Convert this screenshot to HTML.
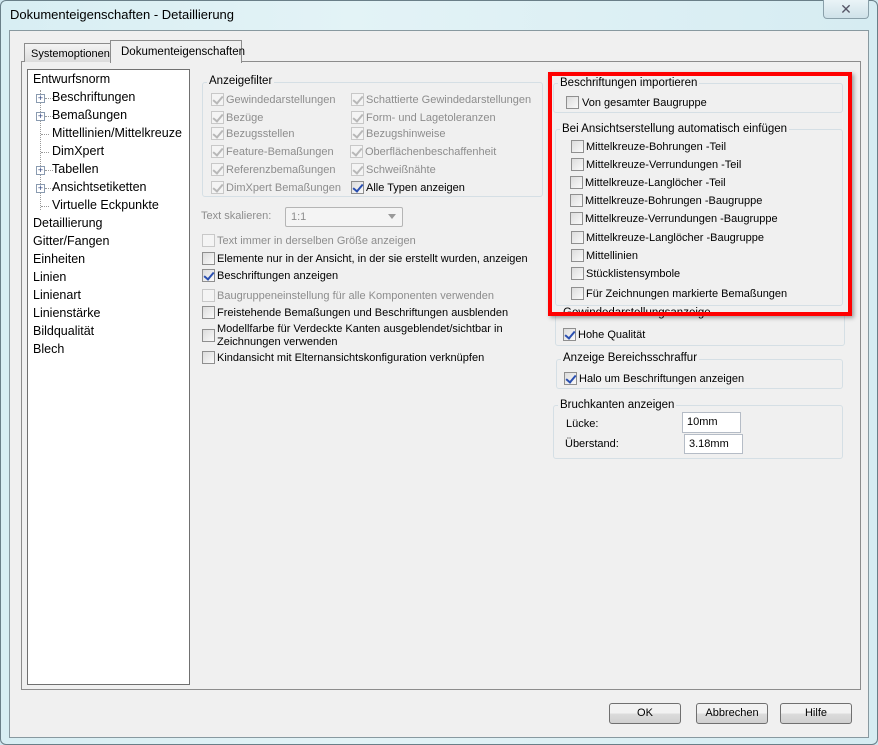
<!DOCTYPE html>
<html><head><meta charset="utf-8"><style>
*{margin:0;padding:0;box-sizing:border-box}
body{width:878px;height:745px;overflow:hidden;background:#cfe6ee;font-family:"Liberation Sans","DejaVu Sans",sans-serif;font-size:11px;color:#000;position:relative}
.a{position:absolute;white-space:nowrap}
.frame{left:0;top:0;width:878px;height:745px;background:linear-gradient(90deg,#d8eef3,#e3f3f6 40%,#d6ecf2);border:1px solid #6a7f88;border-radius:6px}
.client{left:9px;top:30px;width:860px;height:708px;background:#f0f0f0;border:1px solid #8899a0}
.panel{left:21px;top:61px;width:840px;height:629px;background:#fff;border:1px solid #8c8c8c}
.panel2{left:22px;top:62px;width:838px;height:627px;background:#f0f0f0}
.tree{left:27px;top:69px;width:163px;height:616px;background:#fff;border:1px solid #707070}
.ti{position:absolute;white-space:nowrap;font-size:12.5px}
.grp{position:absolute;border:1px solid #d5dfe5;border-radius:3px}
.lg{position:absolute;background:#f0f0f0;padding:0 2px;white-space:nowrap;font-size:11.5px}
.cb{position:absolute;width:13px;height:13px;border:1px solid #8f8f8f;background:linear-gradient(135deg,#dcdcdc,#fafafa)}
.cb.d{border-color:#c8c8c8;background:#f4f4f4}
.ck::after{content:"";position:absolute;left:3px;top:0px;width:4px;height:8px;border:solid #2a4fb0;border-width:0 2px 2px 0;transform:rotate(40deg)}
.cb.d.ck::after{border-color:#b8b8b8}
.gr{color:#8d8d8d}
.btn{position:absolute;width:72px;height:21px;border:1px solid #707070;border-radius:3px;background:linear-gradient(#f2f2f2 50%,#dcdcdc 50%,#d0d0d0);text-align:center;line-height:19px}
.inp{position:absolute;background:#fff;border:1px solid #b5bcc6;padding-left:4px;line-height:18px}
.plus{position:absolute;width:9px;height:9px;border:1px solid #8a9bb0;background:#fff;font-size:9px;line-height:7px;text-align:center;color:#2a3f7a}
.dot{position:absolute;border-left:1px dotted #999}
.dh{position:absolute;border-top:1px dotted #999;width:8px}
</style></head><body>
<div class="a frame"></div>
<div class="a" style="left:10px;top:7px;font-size:13px">Dokumenteigenschaften - Detaillierung</div>
<div class="a" style="left:823px;top:0;width:46px;height:19px;border:1px solid #8aa0aa;border-top:none;border-radius:0 0 4px 4px;background:linear-gradient(#eaf4f7,#cfe2e9);text-align:center;font-size:14px;color:#556;line-height:18px">✕</div>
<div class="a client"></div>
<div class="a panel"></div>
<div class="a panel2"></div>
<div class="a" style="left:24px;top:43px;width:87px;height:19px;border:1px solid #8c8c8c;border-bottom:none;background:linear-gradient(#f4f4f4,#dcdcdc);padding:4px 0 0 6px">Systemoptionen</div>
<div class="a" style="left:110px;top:40px;width:132px;height:23px;border:1px solid #8c8c8c;border-bottom:none;background:#f0f0f0;padding:5px 0 0 10px;font-size:11.5px">Dokumenteigenschaften</div>
<div class="a tree"></div>
<div class="dot" style="left:40px;top:90px;height:120px"></div>
<div class="ti" style="left:33px;top:72px">Entwurfsnorm</div>
<div class="plus" style="left:36px;top:94px">+</div><div class="dh" style="left:45px;top:98px"></div><div class="ti" style="left:52px;top:90px">Beschriftungen</div>
<div class="plus" style="left:36px;top:112px">+</div><div class="dh" style="left:45px;top:116px"></div><div class="ti" style="left:52px;top:108px">Bemaßungen</div>
<div class="dh" style="left:41px;top:134px"></div><div class="ti" style="left:52px;top:126px">Mittellinien/Mittelkreuze</div>
<div class="dh" style="left:41px;top:152px"></div><div class="ti" style="left:52px;top:144px">DimXpert</div>
<div class="plus" style="left:36px;top:166px">+</div><div class="dh" style="left:45px;top:170px"></div><div class="ti" style="left:52px;top:162px">Tabellen</div>
<div class="plus" style="left:36px;top:184px">+</div><div class="dh" style="left:45px;top:188px"></div><div class="ti" style="left:52px;top:180px">Ansichtsetiketten</div>
<div class="dh" style="left:41px;top:206px"></div><div class="ti" style="left:52px;top:198px">Virtuelle Eckpunkte</div>
<div class="ti" style="left:33px;top:216px">Detaillierung</div>
<div class="ti" style="left:33px;top:234px">Gitter/Fangen</div>
<div class="ti" style="left:33px;top:252px">Einheiten</div>
<div class="ti" style="left:33px;top:270px">Linien</div>
<div class="ti" style="left:33px;top:288px">Linienart</div>
<div class="ti" style="left:33px;top:306px">Linienstärke</div>
<div class="ti" style="left:33px;top:324px">Bildqualität</div>
<div class="ti" style="left:33px;top:342px">Blech</div>

<div class="grp" style="left:202px;top:82px;width:341px;height:115px"></div>
<div class="lg" style="left:207px;top:75px">Anzeigefilter</div>
<div class="cb d ck" style="left:211px;top:93px"></div><div class="a gr" style="left:226px;top:94px">Gewindedarstellungen</div>
<div class="cb d ck" style="left:211px;top:111px"></div><div class="a gr" style="left:226px;top:112px">Bezüge</div>
<div class="cb d ck" style="left:211px;top:127px"></div><div class="a gr" style="left:226px;top:128px">Bezugsstellen</div>
<div class="cb d ck" style="left:211px;top:145px"></div><div class="a gr" style="left:226px;top:146px">Feature-Bemaßungen</div>
<div class="cb d ck" style="left:211px;top:163px"></div><div class="a gr" style="left:226px;top:164px">Referenzbemaßungen</div>
<div class="cb d ck" style="left:211px;top:181px"></div><div class="a gr" style="left:226px;top:182px">DimXpert Bemaßungen</div>
<div class="cb d ck" style="left:351px;top:93px"></div><div class="a gr" style="left:366px;top:94px">Schattierte Gewindedarstellungen</div>
<div class="cb d ck" style="left:351px;top:111px"></div><div class="a gr" style="left:366px;top:112px">Form- und Lagetoleranzen</div>
<div class="cb d ck" style="left:351px;top:127px"></div><div class="a gr" style="left:366px;top:128px">Bezugshinweise</div>
<div class="cb d ck" style="left:350px;top:145px"></div><div class="a gr" style="left:365px;top:146px">Oberflächenbeschaffenheit</div>
<div class="cb d ck" style="left:351px;top:163px"></div><div class="a gr" style="left:366px;top:164px">Schweißnähte</div>
<div class="cb ck" style="left:351px;top:181px"></div><div class="a" style="left:366px;top:182px">Alle Typen anzeigen</div>

<div class="a gr" style="left:201px;top:210px">Text skalieren:</div>
<div class="a" style="left:285px;top:207px;width:118px;height:20px;border:1px solid #b5b5b5;border-radius:2px;background:#f4f4f4;color:#8d8d8d;padding:3px 5px">1:1<span style="position:absolute;right:6px;top:6px;border:4px solid transparent;border-top:5px solid #999"></span></div>

<div class="cb d" style="left:202px;top:234px"></div><div class="a gr" style="left:217px;top:235px">Text immer in derselben Größe anzeigen</div>
<div class="cb" style="left:202px;top:252px"></div><div class="a" style="left:217px;top:253px">Elemente nur in der Ansicht, in der sie erstellt wurden, anzeigen</div>
<div class="cb ck" style="left:202px;top:269px"></div><div class="a" style="left:217px;top:270px">Beschriftungen anzeigen</div>
<div class="cb d" style="left:202px;top:289px"></div><div class="a gr" style="left:217px;top:290px">Baugruppeneinstellung für alle Komponenten verwenden</div>
<div class="cb" style="left:202px;top:306px"></div><div class="a" style="left:217px;top:307px">Freistehende Bemaßungen und Beschriftungen ausblenden</div>
<div class="cb" style="left:202px;top:329px"></div><div class="a" style="left:217px;top:323px;line-height:13px">Modellfarbe für Verdeckte Kanten ausgeblendet/sichtbar in<br>Zeichnungen verwenden</div>
<div class="cb" style="left:202px;top:351px"></div><div class="a" style="left:217px;top:352px">Kindansicht mit Elternansichtskonfiguration verknüpfen</div>

<div class="grp" style="left:553px;top:83px;width:290px;height:30px"></div>
<div class="lg" style="left:558px;top:77px">Beschriftungen importieren</div>
<div class="cb" style="left:566px;top:96px"></div><div class="a" style="left:582px;top:97px">Von gesamter Baugruppe</div>

<div class="grp" style="left:555px;top:129px;width:288px;height:177px"></div>
<div class="lg" style="left:560px;top:123px">Bei Ansichtserstellung automatisch einfügen</div>
<div class="cb" style="left:571px;top:140px"></div><div class="a" style="left:586px;top:141px">Mittelkreuze-Bohrungen -Teil</div>
<div class="cb" style="left:571px;top:158px"></div><div class="a" style="left:586px;top:159px">Mittelkreuze-Verrundungen -Teil</div>
<div class="cb" style="left:570px;top:176px"></div><div class="a" style="left:585px;top:177px">Mittelkreuze-Langlöcher -Teil</div>
<div class="cb" style="left:570px;top:194px"></div><div class="a" style="left:585px;top:195px">Mittelkreuze-Bohrungen -Baugruppe</div>
<div class="cb" style="left:570px;top:212px"></div><div class="a" style="left:585px;top:213px">Mittelkreuze-Verrundungen -Baugruppe</div>
<div class="cb" style="left:571px;top:231px"></div><div class="a" style="left:586px;top:232px">Mittelkreuze-Langlöcher -Baugruppe</div>
<div class="cb" style="left:571px;top:249px"></div><div class="a" style="left:586px;top:250px">Mittellinien</div>
<div class="cb" style="left:571px;top:267px"></div><div class="a" style="left:586px;top:268px">Stücklistensymbole</div>
<div class="cb" style="left:571px;top:287px"></div><div class="a" style="left:586px;top:288px">Für Zeichnungen markierte Bemaßungen</div>

<div class="grp" style="left:555px;top:314px;width:290px;height:32px"></div>
<div class="lg" style="left:561px;top:307px">Gewindedarstellungsanzeige</div>
<div class="cb ck" style="left:563px;top:328px"></div><div class="a" style="left:578px;top:329px">Hohe Qualität</div>

<div class="grp" style="left:556px;top:359px;width:287px;height:30px"></div>
<div class="lg" style="left:561px;top:352px">Anzeige Bereichsschraffur</div>
<div class="cb ck" style="left:564px;top:372px"></div><div class="a" style="left:579px;top:373px">Halo um Beschriftungen anzeigen</div>

<div class="grp" style="left:553px;top:405px;width:290px;height:54px"></div>
<div class="lg" style="left:558px;top:399px">Bruchkanten anzeigen</div>
<div class="a" style="left:566px;top:418px">Lücke:</div>
<div class="inp" style="left:682px;top:412px;width:59px;height:21px">10mm</div>
<div class="a" style="left:565px;top:438px">Überstand:</div>
<div class="inp" style="left:684px;top:434px;width:59px;height:20px">3.18mm</div>

<div class="a" style="left:548px;top:72px;width:304px;height:244px;border:4px solid #f00;box-shadow:2px 2px 4px rgba(0,0,0,.35)"></div>

<div class="btn" style="left:609px;top:703px">OK</div>
<div class="btn" style="left:696px;top:703px">Abbrechen</div>
<div class="btn" style="left:780px;top:703px">Hilfe</div>
</body></html>
